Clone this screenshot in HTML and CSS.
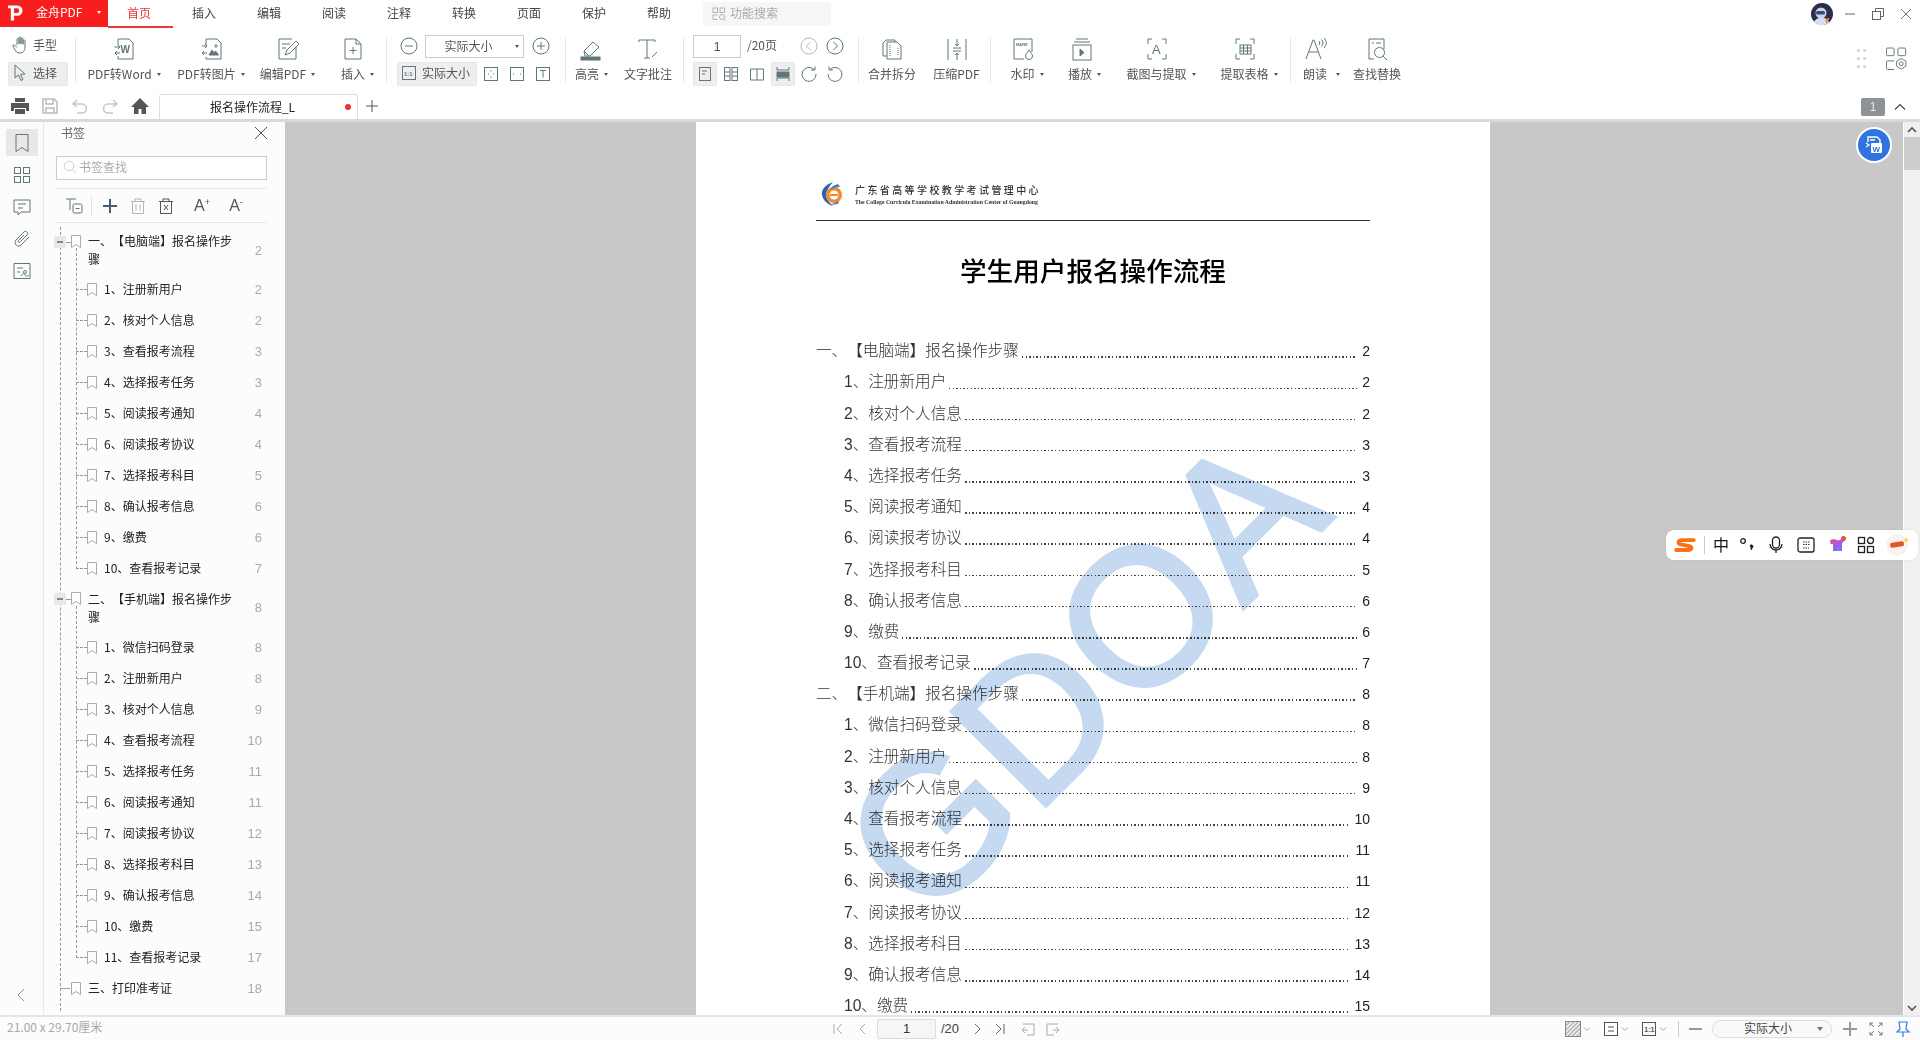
FILE: index.html
```html
<!DOCTYPE html>
<html lang="zh-CN">
<head>
<meta charset="utf-8">
<title>金舟PDF</title>
<link rel="stylesheet" href="styles.css">
</head>
<body>
<svg class="sprite" aria-hidden="true">
  <symbol id="bm" viewBox="0 0 10 13"><path d="M.5.5h9v12L5 9.5.5 12.5z" fill="none" stroke="currentColor"/></symbol>
  <symbol id="chev" viewBox="0 0 8 8"><path d="M1 2.500l3 3 3-3" fill="none" stroke="currentColor"/></symbol>
</svg>
<div class="app">
  <header class="titlebar">
    <div class="brand">
      <svg class="brand-logo" viewBox="0 0 16 18"><path d="M0 1h10a5.500 5.500 0 0 1 0 11H6.500v5H3V4H0zM6.500 4v5h3a2.500 2.500 0 0 0 0-5z" fill="#fff" fill-rule="evenodd"/></svg>
      <span class="brand-name">金舟PDF</span>
      <span class="caret caret-white"></span>
    </div>
    <nav class="tabs">
      <a class="tab tab-on">首页</a><a class="tab">插入</a><a class="tab">编辑</a><a class="tab">阅读</a><a class="tab">注释</a><a class="tab">转换</a><a class="tab">页面</a><a class="tab">保护</a><a class="tab">帮助</a>
    </nav>
    <div class="fn-search">
      <svg class="ic14" viewBox="0 0 14 14"><g fill="none" stroke="#b5b5b5"><rect x="1" y="1" width="4.500" height="4.500"/><rect x="8" y="1" width="4.500" height="4.500"/><path d="M5.500 8H1v4.500h4.500"/><circle cx="10" cy="10" r="2.500"/><path d="M12 12l1.500 1.500"/></g></svg>
      <span>功能搜索</span>
    </div>
    <div class="winctl">
      <svg class="avatar" viewBox="0 0 22 22"><circle cx="11" cy="11" r="11" fill="#2b2b4d"/><path d="M3 19a8 6 0 0 1 14-2l1 3-5 2H7z" fill="#d9dcef"/><circle cx="10" cy="10" r="5.500" fill="#c9d3ea"/><rect x="5" y="8" width="9" height="3.500" rx="1.500" fill="#3a4a7a"/><path d="M14 15l1.500 6 3-6h-2l-1 2.500-.5-2.500z" fill="#f08a1c"/></svg>
      <svg class="win" viewBox="0 0 16 16"><path d="M3 8h10" stroke="#666" fill="none"/></svg>
      <svg class="win" viewBox="0 0 16 16"><g fill="none" stroke="#666"><rect x="2.500" y="5.500" width="8" height="8"/><path d="M5.500 5.500v-3h8v8h-3"/></g></svg>
      <svg class="win" viewBox="0 0 16 16"><path d="M3 3l10 10M13 3L3 13" stroke="#777" fill="none"/></svg>
    </div>
  </header>

  <section class="ribbon">
    <div class="tcol w60 ml8">
      <div class="trow"><button class="sbtn"><svg class="ic18" viewBox="0 0 16 18"><path d="M5 9V3.500a1 1 0 0 1 2 0V8M7 8V2a1 1 0 0 1 2 0v6M9 8V3a1 1 0 0 1 2 0v5.500M11 8V5a1 1 0 0 1 2 0v6c0 4-2 6-5 6s-4-1-5.500-4L1 10c-.5-1 .8-1.800 1.600-1L5 11.500"/></svg><span>手型</span></button></div>
      <div class="trow"><button class="sbtn sbtn-on"><svg class="ic18" viewBox="0 0 16 18"><path d="M3 1v13l3.500-3 2.500 5.500 2-1-2.500-5.200 4.500-.3z"/></svg><span>选择</span></button></div>
    </div>
    <i class="sep ml7"></i>
    <div class="big w77 ml10">
      <svg class="ic24 i5" viewBox="0 0 24 24"><path d="M5 8V2h11l4 4v16H5v-3"/><path d="M1.500 10h5M5 8l2 2-2 2M7 16H2M4 14l-2 2 2 2"/><text x="7.500" y="16" class="svgw">W</text></svg>
      <span class="lbl">PDF转Word<i class="caret"></i></span>
    </div>
    <div class="big w67 ml15">
      <svg class="ic24 i5" viewBox="0 0 24 24"><path d="M6 8V2h11l4 4v16H6v-2"/><path d="M2 9h5M5 7l2 2-2 2M7 16H2M4 14l-2 2 2 2"/><path d="M9 18l3-5 2 3 1.500-2 3 4z" fill="#5f7778"/><circle cx="16" cy="9" r="1.200"/></svg>
      <span class="lbl">PDF转图片<i class="caret"></i></span>
    </div>
    <div class="big w56 ml15">
      <svg class="ic24 i5" viewBox="0 0 24 24"><path d="M20 10v12H3V2h13"/><path d="M6 7h8M6 11h4M9 18l2-5 9-9 3 3-9 9z"/></svg>
      <span class="lbl">编辑PDF<i class="caret"></i></span>
    </div>
    <div class="big w32 ml26">
      <svg class="ic24" viewBox="0 0 24 24"><path d="M4 2h11l5 5v15H4zM15 2v5h5M12 10v7M8.500 13.500h7"/></svg>
      <span class="lbl">插入<i class="caret"></i></span>
    </div>
    <i class="sep ml12"></i>
    <div class="tcol w156 ml10">
      <div class="trow">
        <svg class="ic18 ml3" viewBox="0 0 18 18"><circle cx="9" cy="9" r="8"/><path d="M5 9h8"/></svg>
        <div class="combo ml7"><span>实际大小</span><i class="caret"></i></div>
        <svg class="ic18 ml8" viewBox="0 0 18 18"><circle cx="9" cy="9" r="8"/><path d="M5 9h8M9 5v8"/></svg>
      </div>
      <div class="trow">
        <button class="sbtn sbtn-on w80"><svg class="ic16" viewBox="0 0 16 16"><rect x="1.500" y="1.500" width="13" height="13"/><text x="3" y="11" class="svgs">1:1</text></svg><span>实际大小</span></button>
        <svg class="ic16 ml6" viewBox="0 0 16 16"><rect x="1.500" y="1.500" width="13" height="13"/><path d="M8 4v1.500M5 8h1M10 8h1M8 10.500V12"/></svg>
        <svg class="ic16 ml10" viewBox="0 0 16 16"><rect x="1.500" y="1.500" width="13" height="13"/><path d="M4 8h1M11 8h1"/></svg>
        <svg class="ic16 ml10" viewBox="0 0 16 16"><rect x="1.500" y="1.500" width="13" height="13"/><path d="M5 4.500h6M8 4.500v7"/></svg>
      </div>
    </div>
    <i class="sep ml12"></i>
    <div class="big w32 ml10">
      <svg class="ic24 i3" viewBox="0 0 24 24"><path d="M6 14l9-9 6 5-9 9H7z"/><path d="M6 14l5 5"/><rect x="3" y="20" width="19" height="3" fill="#5f7778"/></svg>
      <span class="lbl">高亮<i class="caret"></i></span>
    </div>
    <div class="big w48 ml16">
      <svg class="ic24" viewBox="0 0 24 24"><path d="M3 5V3h16v2M11 3v18M8 21h6M16 20l5-5"/></svg>
      <span class="lbl">文字批注</span>
    </div>
    <i class="sep ml11"></i>
    <div class="tcol w152 ml9">
      <div class="trow">
        <div class="pagebox">1</div><span class="ptext ml6">/20页</span>
        <svg class="ic18 ml22 dim" viewBox="0 0 18 18"><circle cx="9" cy="9" r="8"/><path d="M10.500 5l-4 4 4 4"/></svg>
        <svg class="ic18 ml8" viewBox="0 0 18 18"><circle cx="9" cy="9" r="8"/><path d="M7.500 5l4 4-4 4"/></svg>
      </div>
      <div class="trow">
        <button class="sq sq-on"><svg class="ic16" viewBox="0 0 16 16"><rect x="2.500" y="1.500" width="11" height="13"/><path d="M5 5h5M5 8h3"/></svg></button>
        <button class="sq ml2"><svg class="ic16" viewBox="0 0 16 16"><rect x="1.500" y="1.500" width="5.500" height="13"/><rect x="9" y="1.500" width="5.500" height="13"/><path d="M1.500 6h5.500M1.500 10h5.500M9 6h5.500M9 10h5.500"/></svg></button>
        <button class="sq ml2"><svg class="ic16" viewBox="0 0 16 16"><path d="M8 3v11M8 3H1.500v11H8M8 3h6.500v11H8"/></svg></button>
        <button class="sq sq-on ml2"><svg class="ic16" viewBox="0 0 16 16"><path d="M2 1v3h12V1M2 15v-3h12v3"/><rect x="2" y="6" width="12" height="5" fill="#5f7778"/></svg></button>
        <svg class="ic18 ml5" viewBox="0 0 18 18"><path d="M14 4.500A7 7 0 1 0 16 9M11 5h4V1.500"/></svg>
        <svg class="ic18 ml8" viewBox="0 0 18 18"><path d="M4 4.500A7 7 0 1 1 2 9M7 5H3V1.500"/></svg>
      </div>
    </div>
    <i class="sep ml13"></i>
    <div class="big w48 ml9">
      <svg class="ic24" viewBox="0 0 24 24"><path d="M7 19H3V6l3-3h9v2M7 5h10l4 4v13H7z"/><path d="M10 8v11M18 11v8" stroke-dasharray="1 1"/></svg>
      <span class="lbl">合并拆分</span>
    </div>
    <div class="big w47 ml17">
      <svg class="ic24" viewBox="0 0 24 24"><path d="M3 2v21M21 2v21M12 2v7M10 7l2 2 2-2M12 23v-7M10 18l2-2 2 2M8 11h8M8 14h8"/></svg>
      <span class="lbl">压缩PDF</span>
    </div>
    <i class="sep ml10"></i>
    <div class="big w33 ml20">
      <svg class="ic24" viewBox="0 0 24 24"><path d="M13 22H3V2h18v13"/><text x="5" y="9" class="svgm">MARK</text><path d="M18 13c2 3 3.500 4.500 3.500 6a3.500 3.500 0 0 1-7 0c0-1.500 1.500-3 3.500-6z"/></svg>
      <span class="lbl">水印<i class="caret"></i></span>
    </div>
    <div class="big w32 ml25">
      <svg class="ic24 i2" viewBox="0 0 24 24"><path d="M6 2h12M4 5h16"/><rect x="3" y="8" width="18" height="15"/><path d="M10 12l4 3.500-4 3.500z" fill="#5f7778"/></svg>
      <span class="lbl">播放<i class="caret"></i></span>
    </div>
    <div class="big w71 ml25">
      <svg class="ic24" viewBox="0 0 24 24"><path d="M7 2H3v5M17 2h4v5M7 22H3v-5M17 22h4v-5"/><text x="7" y="17" class="svga">A</text></svg>
      <span class="lbl">截图与提取<i class="caret"></i></span>
    </div>
    <div class="big w59 ml23">
      <svg class="ic24" viewBox="0 0 24 24"><path d="M7 2H3v5M17 2h4v5M7 22H3v-5M17 22h4v-5"/><rect x="7" y="8" width="11" height="9"/><path d="M7 11h11M7 14h11M10.500 8v9M14.500 8v9"/></svg>
      <span class="lbl">提取表格<i class="caret"></i></span>
    </div>
    <i class="sep ml11"></i>
    <div class="big w38 ml10">
      <svg class="ic24" viewBox="0 0 24 24"><path d="M3 22l7-19h1l7 19M6 15h9M16 4c1 1 1 3 0 4M18.500 2.500c2 2 2 5 0 7M21 1c3 3 3 7 0 10"/></svg>
      <span class="lbl">朗读<i class="caret caret-far"></i></span>
    </div>
    <div class="big w48 ml14">
      <svg class="ic24" viewBox="0 0 24 24"><path d="M9 22H4V2h15v10M7 6h2M11 6h5"/><circle cx="14.500" cy="15.500" r="5"/><path d="M18 19l4 4"/></svg>
      <span class="lbl">查找替换</span>
    </div>
    <div class="ribbon-end">
      <svg class="dots" viewBox="0 0 10 22"><g fill="#d5d5d5"><rect width="3" height="3"/><rect x="7" width="3" height="3"/><rect y="9" width="3" height="3"/><rect x="7" y="9" width="3" height="3"/><rect y="18" width="3" height="3"/><rect x="7" y="18" width="3" height="3"/></g></svg>
      <svg class="cfg" viewBox="0 0 22 24"><g fill="none" stroke="#5f7778"><rect x=".5" y=".5" width="8" height="8" rx="1"/><rect x="12.500" y=".5" width="8" height="8" rx="1"/><path d="M8.500 14h-7a1 1 0 0 0-1 1v7a1 1 0 0 0 1 1h7"/><circle cx="16" cy="17" r="2"/><path d="M16 11.500l4.800 2.800v5.400L16 22.500l-4.800-2.800v-5.400z"/></g></svg>
    </div>
  </section>

  <section class="tabbar">
    <svg class="tb" viewBox="0 0 20 20"><path d="M5 2h10v4H5zM1 7h18v8h-3v-3H4v3H1zM5 13h10v5H5z" fill="#555"/></svg>
    <svg class="tb" viewBox="0 0 20 20"><path d="M3 3h11l3 3v11H3zM6 3v5h7V3M6 17v-5h8v5" fill="none" stroke="#bbb" stroke-width="1.500"/></svg>
    <svg class="tb" viewBox="0 0 20 20"><path d="M7 4L3 8l4 3M3 8h9a4.500 4.500 0 0 1 0 9H7" fill="none" stroke="#c8c8c8" stroke-width="1.500"/></svg>
    <svg class="tb" viewBox="0 0 20 20"><path d="M13 4l4 4-4 3M17 8H8a4.500 4.500 0 0 0 0 9h5" fill="none" stroke="#c8c8c8" stroke-width="1.500"/></svg>
    <svg class="tb" viewBox="0 0 20 20"><path d="M10 2L1 11h3v7h4.500v-5h3v5H16v-7h3z" fill="#555"/></svg>
    <div class="doc-tab"><span class="doc-name">报名操作流程_L</span><i class="dot"></i></div>
    <svg class="add" viewBox="0 0 14 14"><path d="M7 1v12M1 7h12" stroke="#555" fill="none"/></svg>
    <div class="tab-count">1</div>
    <svg class="up" viewBox="0 0 12 8"><path d="M1 6.500l5-5 5 5" fill="none" stroke="#444" stroke-width="1.200"/></svg>
  </section>

  <main class="main">
    <aside class="rail">
      <div class="rail-item rail-on"><svg class="ic20" viewBox="0 0 20 20"><path d="M4 1.500h12v17l-6-4-6 4z"/></svg></div>
      <div class="rail-item"><svg class="ic20" viewBox="0 0 20 20"><rect x="2.500" y="2.500" width="6" height="6"/><rect x="11.500" y="2.500" width="6" height="6"/><rect x="2.500" y="11.500" width="6" height="6"/><rect x="11.500" y="11.500" width="6" height="6"/></svg></div>
      <div class="rail-item"><svg class="ic20" viewBox="0 0 20 20"><path d="M2 3h16v12H9l-3 3v-3H2zM6 7h8M6 11h5"/></svg></div>
      <div class="rail-item"><svg class="ic20" viewBox="0 0 20 20"><path d="M17 8l-8 8c-3 3-8-1-5-5l8-8c2-2 5 1 3 3l-7 7c-1 1-2.500 0-1.500-1.500L12 6"/></svg></div>
      <div class="rail-item"><svg class="ic20" viewBox="0 0 20 20"><path d="M2 2.500h16v15H2zM5 7h6M5 11h3M9 15c2-3 3-3 4-1s3 1 4 0"/><circle cx="13" cy="11" r="1.500"/></svg></div>
      <svg class="rail-back" viewBox="0 0 8 14"><path d="M7 1L1 7l6 6" fill="none" stroke="#8a9a9c"/></svg>
    </aside>

    <aside class="panel">
      <div class="p-head"><span>书签</span>
        <svg class="ic14x" viewBox="0 0 14 14"><path d="M1 1l12 12M13 1L1 13" stroke="#555" fill="none"/></svg>
      </div>
      <div class="p-search">
        <svg class="ic14" viewBox="0 0 14 14"><circle cx="6" cy="6" r="4.800" fill="none" stroke="#ccc"/><path d="M9.500 9.500L13 13" stroke="#ccc"/></svg>
        <span>书签查找</span>
      </div>
      <div class="p-tools">
        <svg class="ic20 ml8" viewBox="0 0 20 20"><path d="M2 3h10M6 3v11"/><rect x="9" y="8" width="9" height="9" rx="1.500"/><path d="M11.500 12.500h4"/></svg>
        <i class="vsep ml7"></i>
        <svg class="ic20 ml8 dark" viewBox="0 0 20 20"><path d="M10 3v14M3 10h14"/></svg>
        <svg class="ic20 ml8 dim" viewBox="0 0 20 20"><path d="M4.500 5.500v12h11v-12M3 5.500h14M7 5.500V3h6v2.500M8 8.500v6M12 8.500v6"/></svg>
        <svg class="ic20 ml8 dark2" viewBox="0 0 20 20"><path d="M4.500 5.500v12h11v-12M3 5.500h14M7 5.500V3h6v2.500M8 9l4 5M12 9l-4 5"/></svg>
        <span class="fz ml16">A<sup>+</sup></span>
        <span class="fz ml14">A<sup>-</sup></span>
      </div>
      <div class="tree">
        <div class="node l0 two"><i class="toggle"></i><svg class="bm"><use href="#bm"/></svg><span class="t">一、【电脑端】报名操作步骤</span><span class="n">2</span></div>
        <div class="group">
          <div class="node l1"><svg class="bm"><use href="#bm"/></svg><span class="t">1、注册新用户</span><span class="n">2</span></div>
          <div class="node l1"><svg class="bm"><use href="#bm"/></svg><span class="t">2、核对个人信息</span><span class="n">2</span></div>
          <div class="node l1"><svg class="bm"><use href="#bm"/></svg><span class="t">3、查看报考流程</span><span class="n">3</span></div>
          <div class="node l1"><svg class="bm"><use href="#bm"/></svg><span class="t">4、选择报考任务</span><span class="n">3</span></div>
          <div class="node l1"><svg class="bm"><use href="#bm"/></svg><span class="t">5、阅读报考通知</span><span class="n">4</span></div>
          <div class="node l1"><svg class="bm"><use href="#bm"/></svg><span class="t">6、阅读报考协议</span><span class="n">4</span></div>
          <div class="node l1"><svg class="bm"><use href="#bm"/></svg><span class="t">7、选择报考科目</span><span class="n">5</span></div>
          <div class="node l1"><svg class="bm"><use href="#bm"/></svg><span class="t">8、确认报考信息</span><span class="n">6</span></div>
          <div class="node l1"><svg class="bm"><use href="#bm"/></svg><span class="t">9、缴费</span><span class="n">6</span></div>
          <div class="node l1"><svg class="bm"><use href="#bm"/></svg><span class="t">10、查看报考记录</span><span class="n">7</span></div>
        </div>
        <div class="node l0 two"><i class="toggle"></i><svg class="bm"><use href="#bm"/></svg><span class="t">二、【手机端】报名操作步骤</span><span class="n">8</span></div>
        <div class="group">
          <div class="node l1"><svg class="bm"><use href="#bm"/></svg><span class="t">1、微信扫码登录</span><span class="n">8</span></div>
          <div class="node l1"><svg class="bm"><use href="#bm"/></svg><span class="t">2、注册新用户</span><span class="n">8</span></div>
          <div class="node l1"><svg class="bm"><use href="#bm"/></svg><span class="t">3、核对个人信息</span><span class="n">9</span></div>
          <div class="node l1"><svg class="bm"><use href="#bm"/></svg><span class="t">4、查看报考流程</span><span class="n">10</span></div>
          <div class="node l1"><svg class="bm"><use href="#bm"/></svg><span class="t">5、选择报考任务</span><span class="n">11</span></div>
          <div class="node l1"><svg class="bm"><use href="#bm"/></svg><span class="t">6、阅读报考通知</span><span class="n">11</span></div>
          <div class="node l1"><svg class="bm"><use href="#bm"/></svg><span class="t">7、阅读报考协议</span><span class="n">12</span></div>
          <div class="node l1"><svg class="bm"><use href="#bm"/></svg><span class="t">8、选择报考科目</span><span class="n">13</span></div>
          <div class="node l1"><svg class="bm"><use href="#bm"/></svg><span class="t">9、确认报考信息</span><span class="n">14</span></div>
          <div class="node l1"><svg class="bm"><use href="#bm"/></svg><span class="t">10、缴费</span><span class="n">15</span></div>
          <div class="node l1"><svg class="bm"><use href="#bm"/></svg><span class="t">11、查看报考记录</span><span class="n">17</span></div>
        </div>
        <div class="node l0 leaf"><svg class="bm"><use href="#bm"/></svg><span class="t">三、打印准考证</span><span class="n">18</span></div>
      </div>
    </aside>

    <div class="viewer">
      <article class="page">
        <div class="doc-head">
          <svg class="doc-logo" viewBox="0 0 26 26"><circle cx="15" cy="14" r="8" fill="#f08a2c"/><circle cx="15" cy="14" r="4.500" fill="#fff"/><path d="M11 14h8" stroke="#f08a2c" stroke-width="2"/><path d="M14 1C6 4 2 9 3 14s5 9 11 11c-4-4-7-7-7-11s3-8 7-13z" fill="#2f62a8"/><path d="M19 3c-4 1-7 3-8 6 3-2 6-3 10-3zM20 22c-3 2-6 2-9 1 3 0 6-1 8-3z" fill="#3f7cc4"/></svg>
          <div class="doc-org">
            <div class="org-cn">广东省高等学校教学考试管理中心</div>
            <div class="org-en">The College Curricula Examination Administration Center of Guangdong</div>
          </div>
        </div>
        <h1 class="doc-title">学生用户报名操作流程</h1>
        <ol class="toc">
          <li class="r0"><span>一、【电脑端】报名操作步骤</span><i></i><b>2</b></li>
          <li><span>1、注册新用户</span><i></i><b>2</b></li>
          <li><span>2、核对个人信息</span><i></i><b>2</b></li>
          <li><span>3、查看报考流程</span><i></i><b>3</b></li>
          <li><span>4、选择报考任务</span><i></i><b>3</b></li>
          <li><span>5、阅读报考通知</span><i></i><b>4</b></li>
          <li><span>6、阅读报考协议</span><i></i><b>4</b></li>
          <li><span>7、选择报考科目</span><i></i><b>5</b></li>
          <li><span>8、确认报考信息</span><i></i><b>6</b></li>
          <li><span>9、缴费</span><i></i><b>6</b></li>
          <li><span>10、查看报考记录</span><i></i><b>7</b></li>
          <li class="r0"><span>二、【手机端】报名操作步骤</span><i></i><b>8</b></li>
          <li><span>1、微信扫码登录</span><i></i><b>8</b></li>
          <li><span>2、注册新用户</span><i></i><b>8</b></li>
          <li><span>3、核对个人信息</span><i></i><b>9</b></li>
          <li><span>4、查看报考流程</span><i></i><b>10</b></li>
          <li><span>5、选择报考任务</span><i></i><b>11</b></li>
          <li><span>6、阅读报考通知</span><i></i><b>11</b></li>
          <li><span>7、阅读报考协议</span><i></i><b>12</b></li>
          <li><span>8、选择报考科目</span><i></i><b>13</b></li>
          <li><span>9、确认报考信息</span><i></i><b>14</b></li>
          <li><span>10、缴费</span><i></i><b>15</b></li>
        </ol>
        <div class="watermark">GDOA</div>
      </article>
      <div class="vscroll">
        <div class="vs-btn"><svg viewBox="0 0 10 8" class="arr"><path d="M1 6l4-4 4 4" fill="none" stroke="#555" stroke-width="1.600"/></svg></div>
        <div class="vs-thumb"></div>
        <div class="vs-track"></div>
        <div class="vs-btn"><svg viewBox="0 0 10 8" class="arr"><path d="M1 2l4 4 4-4" fill="none" stroke="#555" stroke-width="1.600"/></svg></div>
      </div>
      <div class="float-word"><svg viewBox="0 0 24 24" class="ic24w"><path d="M6 9V4h9l3 3v3M8 7h5M4 10l3 2-3 2" fill="none" stroke="#fff" stroke-width="1.400"/><rect x="9" y="10" width="11" height="10" rx="1" fill="#fff"/><text x="10.500" y="18.500" class="svgfw">W</text></svg></div>
      <div class="sogou">
        <svg class="sg-s" viewBox="0 0 20 16"><path d="M18 3.500H7C4 3.500 3 6.500 6 7.500l8 1.500c3 1 2 3.500-1 3.500H2" fill="none" stroke="#f97316" stroke-width="3.500" stroke-linecap="round"/></svg>
        <i class="sg-sep"></i>
        <span class="sg-zh">中</span>
        <svg class="sg sg-p" viewBox="0 0 18 18"><circle cx="5" cy="5" r="2.300" fill="none" stroke="#222" stroke-width="1.300"/><path d="M12 10a1.500 1.500 0 1 1 2.500 1.500L13 14" fill="#222" stroke="#222"/></svg>
        <svg class="sg" viewBox="0 0 18 18"><rect x="5.500" y="1" width="7" height="11" rx="3.500" fill="none" stroke="#222" stroke-width="1.300"/><path d="M3 8a6 6 0 0 0 12 0M9 14v3" fill="none" stroke="#222" stroke-width="1.300"/></svg>
        <svg class="sg" viewBox="0 0 18 18"><rect x="1" y="2" width="16" height="14" rx="2" fill="none" stroke="#222" stroke-width="1.300"/><path d="M6 6h7M6 8.500h7M6 12h6" stroke="#333" stroke-dasharray="1.500 1"/></svg>
        <svg class="sg sg-shirt" viewBox="0 0 18 18"><defs><linearGradient id="sh" x1="0" y1="0" x2="1" y2="1"><stop offset="0" stop-color="#f0565a"/><stop offset=".5" stop-color="#a855f7"/><stop offset="1" stop-color="#3b9cf6"/></linearGradient></defs><path d="M1 4l4-1 4 1.500 4-1.500 2 3-2 1v8H4V8L1.500 8z" fill="url(#sh)"/><circle cx="14.500" cy="2.500" r="2.500" fill="#f04c3c"/></svg>
        <svg class="sg sg-grid" viewBox="0 0 18 18"><g fill="none" stroke="#222" stroke-width="1.300"><rect x="1.500" y="1.500" width="6" height="6"/><circle cx="13.500" cy="4.500" r="3"/><rect x="1.500" y="10.500" width="6" height="6"/><rect x="10.500" y="10.500" width="6" height="6"/></g></svg>
        <svg class="sg-av" viewBox="0 0 22 22"><circle cx="10" cy="11" r="10" fill="#fdf3ee" stroke="#eee"/><rect x="3" y="8" width="14" height="5" rx="2" fill="#e0582a" transform="rotate(-8 10 10)"/><path d="M19 3l1 2 2 1-2 1-1 2-1-2-2-1 2-1z" fill="#f6d94a"/></svg>
      </div>
    </div>
  </main>

  <footer class="status">
    <span class="size">21.00 x 29.70厘米</span>
    <div class="pager">
      <svg class="pg" viewBox="0 0 20 20"><path d="M6 5v10M14 5l-5 5 5 5" fill="none" stroke="#aaa"/></svg>
      <svg class="pg ml5" viewBox="0 0 20 20"><path d="M12 5l-5 5 5 5" fill="none" stroke="#aaa"/></svg>
      <div class="pg-in ml4">1</div>
      <span class="pg-total ml5">/20</span>
      <svg class="pg ml7" viewBox="0 0 20 20"><path d="M8 5l5 5-5 5" fill="none" stroke="#666"/></svg>
      <svg class="pg ml3" viewBox="0 0 20 20"><path d="M14 5v10M6 5l5 5-5 5" fill="none" stroke="#666"/></svg>
      <svg class="pg ml8" viewBox="0 0 20 20"><path d="M5 5h11v11H9M4 11h6M7 8l-3 3 3 3" fill="none" stroke="#aaa"/></svg>
      <svg class="pg ml5" viewBox="0 0 20 20"><path d="M15 5H4v11h7M10 11h6M13 8l3 3-3 3" fill="none" stroke="#aaa"/></svg>
    </div>
    <div class="st-right">
      <svg class="pg" viewBox="0 0 20 20"><defs><pattern id="ht" width="3" height="3" patternUnits="userSpaceOnUse" patternTransform="rotate(-45)"><rect width="3" height="1.500" fill="#aaa"/></pattern></defs><rect x="2.500" y="2.500" width="15" height="15" fill="url(#ht)" stroke="#888"/></svg>
      <svg class="chv"><use href="#chev"/></svg>
      <svg class="pg ml10" viewBox="0 0 20 20"><g fill="none" stroke="#555"><rect x="3.500" y="3.500" width="13" height="13"/><path d="M7 8h6M7 12h6"/></g></svg>
      <svg class="chv"><use href="#chev"/></svg>
      <svg class="pg ml10" viewBox="0 0 20 20"><rect x="3.500" y="3.500" width="13" height="13" fill="none" stroke="#555"/><text x="5.300" y="13" class="svgs2">1:1</text></svg>
      <svg class="chv"><use href="#chev"/></svg>
      <i class="st-sep"></i>
      <svg class="pg ml7" viewBox="0 0 20 20"><path d="M3 10h13" stroke="#999" stroke-width="2"/></svg>
      <div class="pill ml6"><span>实际大小</span><i class="pill-caret"></i></div>
      <svg class="pg ml8" viewBox="0 0 20 20"><path d="M3 10h14M10 3v14" stroke="#999" stroke-width="2"/></svg>
      <svg class="pg ml6" viewBox="0 0 20 20"><path d="M4 7V4h3M13 4h3v3M4 13v3h3M16 13v3h-3M4 4l4 4M16 4l-4 4M4 16l4-4M16 16l-4-4" fill="none" stroke="#777"/></svg>
      <svg class="pg ml7" viewBox="0 0 20 20"><path d="M6 3h8l-1 7 3 3H4l3-3zM10 13v5" fill="none" stroke="#2f7de1" stroke-width="1.200"/></svg>
    </div>
  </footer>
</div>
</body>
</html>
```

FILE: styles.css
```css
* { box-sizing: border-box; }
html, body { margin: 0; height: 100%; overflow: hidden; background: #fff; }
body { font: 12px/1.2 "Noto Sans CJK SC", "Liberation Sans", sans-serif; color: #444; text-spacing-trim: space-all; }
.sprite { display: none; }
button { font: inherit; color: inherit; border: 0; background: none; padding: 0; }
svg { flex: none; display: block; }
i { font-style: normal; }

.ml2 { margin-left: 2px; } .ml3 { margin-left: 3px; } .ml4 { margin-left: 4px; } .ml5 { margin-left: 5px; }
.ml6 { margin-left: 6px; } .ml7 { margin-left: 7px; } .ml8 { margin-left: 8px; } .ml9 { margin-left: 9px; }
.ml10 { margin-left: 10px; } .ml11 { margin-left: 11px; } .ml12 { margin-left: 12px; } .ml13 { margin-left: 13px; }
.ml14 { margin-left: 14px; } .ml15 { margin-left: 15px; } .ml16 { margin-left: 16px; } .ml17 { margin-left: 17px; }
.ml20 { margin-left: 20px; } .ml22 { margin-left: 22px; } .ml23 { margin-left: 23px; } .ml25 { margin-left: 25px; } .ml26 { margin-left: 26px; }
.w32 { width: 32px; } .w33 { width: 33px; } .w38 { width: 38px; } .w47 { width: 47px; } .w48 { width: 48px; }
.w56 { width: 56px; } .w59 { width: 59px; } .w60 { width: 60px; } .w67 { width: 67px; } .w71 { width: 71px; }
.w77 { width: 77px; } .w80 { width: 80px; } .w152 { width: 152px; } .w156 { width: 156px; }

.app { display: flex; flex-direction: column; width: 1920px; height: 1040px; }

/* title bar */
.titlebar { display: flex; align-items: center; height: 28px; flex: none; }
.brand { display: flex; align-items: center; width: 108px; height: 27px; align-self: flex-start; background: #f91e1e; color: #fff; padding-bottom: 2px; }
.brand-logo { width: 15px; height: 18px; margin-left: 8px; }
.brand-name { margin-left: 13px; font-size: 12px; }
.caret { display: inline-block; width: 0; height: 0; border: 2.5px solid transparent; border-top: 3px solid #555; border-bottom: 0; margin-left: 5px; vertical-align: 2px; }
.caret-white { border-top-color: #fff; margin-left: 15px; }
.tabs { display: flex; height: 28px; }
.tab { width: 65px; padding-right: 3px; line-height: 25px; text-align: center; color: #444; }
.tab-on { color: #e8383a; border-bottom: 2px solid #e53935; }
.fn-search { display: flex; align-items: center; gap: 4px; width: 128px; height: 24px; margin-left: 10px; padding-left: 9px; padding-bottom: 1px; border-radius: 3px; background: #f5f6f7; color: #aaa; }
.ic14 { width: 14px; height: 14px; }
.winctl { display: flex; align-items: center; gap: 12px; margin-left: auto; padding-right: 6px; }
.avatar { width: 22px; height: 22px; margin-right: -3px; }
.win { width: 16px; height: 16px; }

/* ribbon */
.ribbon { display: flex; flex: none; height: 62px; position: relative; }
.sep { flex: none; width: 1px; height: 44px; margin-top: 10px; background: #e8e8e8; }
.big { flex: none; display: flex; flex-direction: column; align-items: center; padding-top: 9px; }
.big:has(.caret) { padding-right: 10px; }
.i5 { margin-left: 10px; }
.i3 { margin-left: 6px; }
.i2 { margin-left: 4px; }
.lbl { margin-top: 6px; height: 14px; line-height: 14px; white-space: nowrap; color: #555; font-size: 12px; }
.lbl .caret { position: absolute; margin-top: 6px; }
.lbl .caret-far { margin-left: 9px; }
.ic24 { width: 24px; height: 24px; fill: none; stroke: #5f7778; stroke-width: 1; }
.ic18 { width: 18px; height: 18px; fill: none; stroke: #5f7778; stroke-width: 1; }
.ic16 { width: 16px; height: 16px; fill: none; stroke: #5f7778; stroke-width: 1; }
.ic20 { width: 20px; height: 20px; fill: none; stroke: #5f7778; stroke-width: 1; }
.dim { opacity: .5; }
.dark { stroke: #4a5a70; stroke-width: 2; }
.dark2 { stroke: #555; }
.tcol { flex: none; display: flex; flex-direction: column; gap: 4px; padding-top: 6px; }
.trow { display: flex; align-items: center; height: 24px; }
.sbtn { display: flex; align-items: center; gap: 4px; height: 24px; width: 60px; padding: 0 0 2px 3px; color: #555; white-space: nowrap; }
.sbtn-on { background: #eeeeee; border-radius: 2px; box-shadow: inset 0 0 0 1px #e8e8e8; }
.sbtn.w80 { width: 80px; padding-left: 4px; gap: 5px; }
.combo { position: relative; flex: none; width: 99px; height: 23px; border: 1px solid #ccc; text-align: center; line-height: 19px; color: #555; padding-right: 12px; }
.combo .caret { position: absolute; right: 4px; top: 9px; }
.pagebox { flex: none; width: 48px; height: 23px; border: 1px solid #ccc; text-align: center; line-height: 21px; font-family: "Liberation Sans", sans-serif; font-size: 13px; color: #555; }
.ptext { white-space: nowrap; color: #555; width: 31px; font-size: 12px; padding-bottom: 2px; }
.sq { flex: none; display: flex; align-items: center; justify-content: center; width: 24px; height: 24px; }
.sq-on { background: #eeeeee; border-radius: 2px; box-shadow: inset 0 0 0 1px #e8e8e8; }
.ribbon-end { display: flex; align-items: center; gap: 20px; margin-left: auto; padding: 0 13px 0 0; }
.dots { width: 9px; height: 20px; }
.cfg { width: 21px; height: 24px; }
.svgw { font: bold 10px "Liberation Sans", sans-serif; fill: #5f7778; stroke: none; }
.svgs { font: bold 6px "Liberation Sans", sans-serif; fill: #5f7778; stroke: none; }
.svgs2 { font: bold 7px "Liberation Sans", sans-serif; fill: #555; }
.svgm { font: bold 4px "Liberation Sans", sans-serif; fill: #5f7778; stroke: none; }
.svga { font: 13px "Liberation Sans", sans-serif; fill: #5f7778; stroke: none; }
.svgfw { font: bold 8px "Liberation Sans", sans-serif; fill: #2e73e0; }

/* tab bar */
.tabbar { display: flex; align-items: flex-end; height: 29px; flex: none; padding-left: 5px; }
.tb { width: 20px; height: 20px; margin: 0 5px 3px; }
.doc-tab { position: relative; width: 199px; height: 25px; margin-left: 4px; border: 1px solid #ddd; border-bottom: 0; border-radius: 3px 3px 0 0; background: #fff; text-align: center; line-height: 23px; color: #222; }
.doc-name { margin-right: 12px; }
.dot { position: absolute; right: 6px; top: 9px; width: 6px; height: 6px; border-radius: 50%; background: #ee3030; }
.add { width: 14px; height: 14px; margin: 0 7px 6px; }
.tab-count { width: 24px; height: 18px; margin: 0 0 3px auto; border-radius: 2px; background: #8e9294; color: #dfeaf5; text-align: center; font: 12px/18px "Liberation Sans", sans-serif; }
.up { width: 12px; height: 8px; margin: 0 14px 8px 9px; }

/* main */
.main { display: flex; flex: 1; min-height: 0; border-top: 3px solid #d9d9d9; }
.rail { position: relative; flex: none; width: 44px; padding: 7px 6px 0; background: #fcfcfc; border-right: 1px solid #e8e8e8; }
.rail-item { display: flex; align-items: center; justify-content: center; width: 32px; height: 27px; margin-bottom: 5px; }
.rail-on { background: #e8e8e8; }
.rail-back { position: absolute; left: 17px; bottom: 13px; width: 8px; height: 14px; }
.panel { display: flex; flex-direction: column; flex: none; width: 241px; background: #fcfcfc; }
.p-head { display: flex; align-items: center; justify-content: space-between; height: 24px; padding: 0 17px 2px 17px; color: #666; }
.ic14x { width: 14px; height: 14px; }
.p-search { display: flex; align-items: center; gap: 2px; height: 24px; margin: 10px 18px 0 12px; padding: 0 0 2px 6px; border: 1px solid #ccc; background: #fff; color: #aaa; }
.p-tools { display: flex; align-items: center; height: 35px; margin: 8px 18px 0 12px; border-top: 1px solid #e4e6ec; border-bottom: 1px solid #e4e6ec; }
.vsep { width: 1px; height: 20px; background: #e4e4e4; }
.fz { font: 16px/20px "Liberation Sans", sans-serif; color: #555; width: 20px; text-align: center; }
.fz sup { font-size: 9px; line-height: 0; }
.tree { position: relative; flex: 1; min-height: 0; overflow: hidden; padding-top: 3.500px; color: #222; }
.tree::before { content: ""; position: absolute; left: 16px; top: 4px; bottom: 4px; border-left: 1px dashed #999; }
.node { position: relative; display: flex; align-items: center; height: 31px; padding-right: 23px; }
.node .t { white-space: nowrap; }
.node .n { margin-left: auto; color: #aaa; font: 13px "Liberation Sans", sans-serif; }
.bm { width: 10px; height: 13px; color: #aaa; margin-right: 7px; }
.l0 { padding-left: 27px; }
.l1 { padding-left: 43px; }
.two { height: 47.500px; }
.two .t { width: 150px; white-space: normal; line-height: 18px; }
.two .bm { align-self: flex-start; margin-top: 8px; }
.toggle { position: absolute; left: 10px; top: 9px; width: 12px; height: 12px; border-radius: 1px; background: #e8e8ec; }
.toggle::before { content: ""; position: absolute; left: 3px; top: 5px; width: 6px; height: 2px; background: #888; }
.toggle::after { content: ""; position: absolute; left: 12px; top: 6px; width: 5px; border-top: 1px dashed #999; }
.group { position: relative; }
.group::before { content: ""; position: absolute; left: 32px; top: -26px; bottom: 15px; border-left: 1px dashed #999; }
.l1::before { content: ""; position: absolute; left: 32px; top: 15px; width: 11px; border-top: 1px dashed #999; }
.leaf::before { content: ""; position: absolute; left: 16px; top: 15px; width: 10px; border-top: 1px dashed #999; }

/* viewer */
.viewer { position: relative; display: flex; flex: 1; min-width: 0; background: #c8c8c8; overflow: hidden; }
.page { position: relative; flex: none; width: 794px; margin-left: 411px; padding: 59px 120px 0; background: #fff; overflow: hidden; }
.doc-head { display: flex; align-items: center; height: 26px; padding: 0 0 13px 3px; border-bottom: 1.500px solid #333; box-sizing: content-box; }
.doc-logo { width: 26px; height: 26px; margin-right: 10px; }
.org-cn { font-size: 10px; line-height: 14px; letter-spacing: 2.400px; color: #333; font-weight: 500; white-space: nowrap; }
.org-en { margin-top: 1px; font: bold 5.800px/8px "Liberation Serif", serif; color: #333; white-space: nowrap; }
.doc-title { margin: 29px 0 0; font-size: 26.600px; line-height: 40px; font-weight: 500; text-align: center; color: #000; }
.toc { list-style: none; margin: 46px 0 0; padding: 0; font-family: "Liberation Sans", "Noto Sans CJK SC", sans-serif; font-size: 15.600px; color: #333; }
.toc li { display: flex; align-items: center; height: 31.200px; padding-left: 28px; white-space: nowrap; font-weight: 300; }
.toc li.r0 { padding-left: 0; }
.toc i { flex: 1; height: 1.500px; margin: 11px 5px 0 3px; background: repeating-linear-gradient(90deg, #444 0 1.500px, transparent 1.500px 3.600px); }
.toc b { font-weight: 400; font-size: 14px; color: #222; }
.watermark { position: absolute; left: 68px; top: 454px; width: 640px; text-align: center; font: 194px/1 "Liberation Sans", sans-serif; letter-spacing: 2px; color: #c5d9f1; -webkit-text-stroke: 4px #c5d9f1; transform: rotate(-45deg); mix-blend-mode: multiply; white-space: nowrap; }

.float-word { position: absolute; left: 1573px; top: 7px; display: flex; align-items: center; justify-content: center; width: 32px; height: 32px; border-radius: 50%; background: #2e73e0; box-shadow: 0 0 0 2px #fff; }
.ic24w { width: 24px; height: 24px; }
.sogou { position: absolute; left: 1381px; top: 408px; display: flex; align-items: center; width: 252px; height: 30px; border-radius: 8px; background: #fff; box-shadow: 0 0 2px rgba(0,0,0,.1); padding-left: 8px; }
.sg-s { width: 22px; height: 18px; }
.sg-sep { width: 1px; height: 18px; margin: 0 7px 0 8px; background: #ccc; }
.sg-zh { width: 18px; font-size: 16px; line-height: 18px; color: #111; text-align: center; margin-right: 8px; padding-bottom: 3px; height: 20px; }
.sg { width: 18px; height: 18px; margin-right: 12px; }
.sg-p { margin-right: 11px; }
.sg-shirt { margin-left: 2px; margin-right: 10px; }
.sg-grid { margin-right: 12px; }
.sg-av { width: 22px; height: 22px; }
.vscroll { position: absolute; right: 0; top: 0; bottom: 0; display: flex; flex-direction: column; width: 17px; background: #f0f0f0; border-left: 1px solid #fff; }
.vs-btn { display: flex; align-items: center; justify-content: center; height: 15px; flex: none; }
.arr { width: 10px; height: 8px; }
.vs-thumb { height: 33px; flex: none; background: #cdcdcd; }
.vs-track { flex: 1; }

/* status */
.status { display: flex; align-items: center; flex: none; height: 25px; border-top: 2px solid #e4e4ea; background: #fcfcfc; position: relative; }
.size { width: 828px; padding: 0 0 2px 7px; color: #aaa; flex: none; }
.pager { display: flex; align-items: center; }
.pg { width: 20px; height: 20px; }
.pg-in { width: 59px; height: 20px; border: 1px solid #ddd; border-radius: 2px; text-align: center; font: 13px/18px "Liberation Sans", sans-serif; color: #333; background: #f6f6f6; }
.pg-total { width: 19px; font: 13px "Liberation Sans", sans-serif; color: #444; }
.st-right { display: flex; align-items: center; margin-left: auto; padding-right: 7px; }
.chv { width: 8px; height: 8px; color: #aaa; }
.st-sep { width: 1px; height: 16px; margin-left: 11px; background: #ccc; }
.pill { position: relative; width: 120px; height: 18px; border: 1px solid #ddd; border-radius: 9px; text-align: center; line-height: 14px; color: #444; padding-right: 8px; background: #f9f9f9; }
.pill-caret { position: absolute; right: 8px; top: 6px; border: 3px solid transparent; border-top: 4px solid #6a7a7c; border-bottom: 0; }
```
